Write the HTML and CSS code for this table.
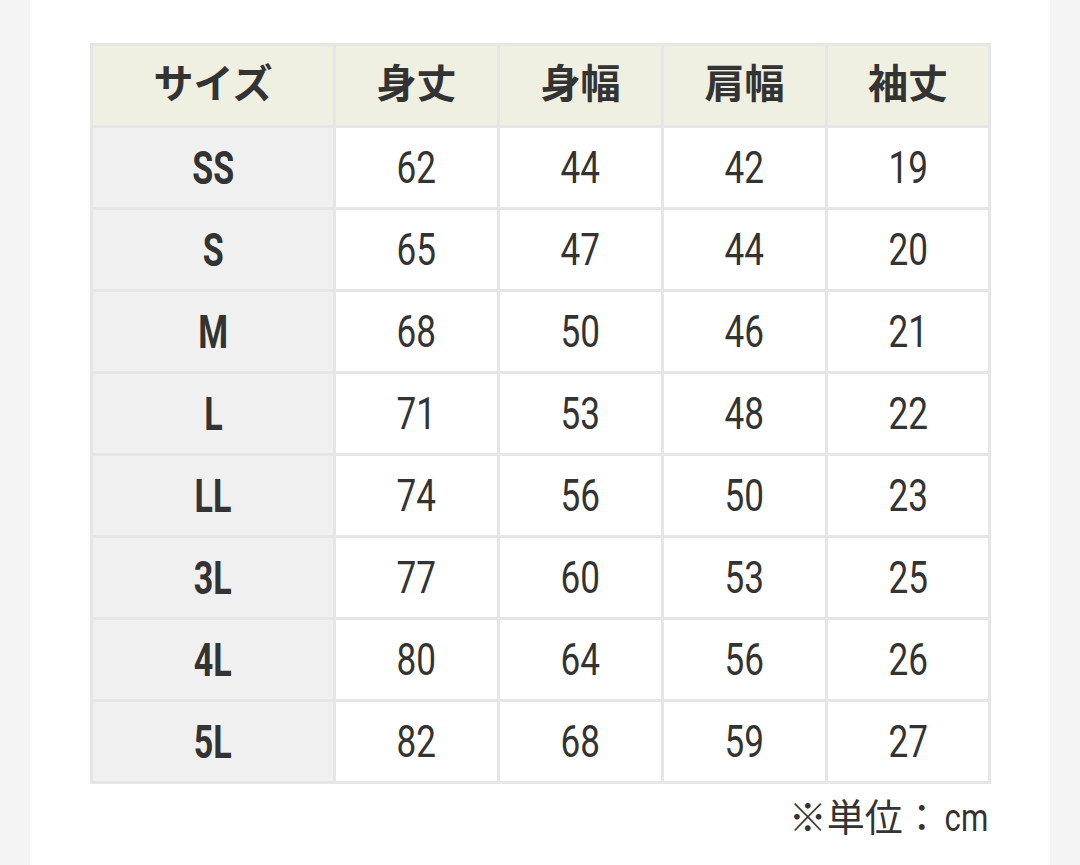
FILE: index.html
```html
<!DOCTYPE html>
<html lang="ja">
<head>
<meta charset="utf-8">
<link rel="stylesheet" href="styles.css">
</head>
<body>
<div class="panel">
  <table class="size-table">
    <colgroup>
      <col class="c1"><col class="cn"><col class="cn"><col class="cn"><col class="cl">
    </colgroup>
    <thead>
      <tr><th>サイズ</th><th>身丈</th><th>身幅</th><th>肩幅</th><th>袖丈</th></tr>
    </thead>
    <tbody>
      <tr><th><span class="n">SS</span></th><td><span class="n">62</span></td><td><span class="n">44</span></td><td><span class="n">42</span></td><td><span class="n">19</span></td></tr>
      <tr><th><span class="n">S</span></th><td><span class="n">65</span></td><td><span class="n">47</span></td><td><span class="n">44</span></td><td><span class="n">20</span></td></tr>
      <tr><th><span class="n">M</span></th><td><span class="n">68</span></td><td><span class="n">50</span></td><td><span class="n">46</span></td><td><span class="n">21</span></td></tr>
      <tr><th><span class="n">L</span></th><td><span class="n">71</span></td><td><span class="n">53</span></td><td><span class="n">48</span></td><td><span class="n">22</span></td></tr>
      <tr><th><span class="n">LL</span></th><td><span class="n">74</span></td><td><span class="n">56</span></td><td><span class="n">50</span></td><td><span class="n">23</span></td></tr>
      <tr><th><span class="n">3L</span></th><td><span class="n">77</span></td><td><span class="n">60</span></td><td><span class="n">53</span></td><td><span class="n">25</span></td></tr>
      <tr><th><span class="n">4L</span></th><td><span class="n">80</span></td><td><span class="n">64</span></td><td><span class="n">56</span></td><td><span class="n">26</span></td></tr>
      <tr><th><span class="n">5L</span></th><td><span class="n">82</span></td><td><span class="n">68</span></td><td><span class="n">59</span></td><td><span class="n">27</span></td></tr>
    </tbody>
  </table>
  <p class="unit">※単位：<span class="cm">cm</span></p>
</div>
</body>
</html>
```

FILE: styles.css
```css
html, body {
  margin: 0;
  padding: 0;
}
body {
  background: #f4f4f4;
  font-family: "Noto Sans CJK JP", "Roboto", sans-serif;
  color: #333333;
  height: 865px;
  overflow: hidden;
}
.panel {
  box-sizing: border-box;
  background: #ffffff;
  margin: 0 30px;
  padding: 43px 60px 0 60px;
  height: 865px;
}
.size-table {
  border-collapse: collapse;
  width: 898px;
  table-layout: fixed;
  border: 2px solid #e4e4e4;
}
.c1 { width: 243px; }
.cn { width: 164px; }
.cl { width: 163px; }
.size-table th,
.size-table td {
  border: 3px solid #e6e6e6;
  height: 79px;
  padding: 0;
  text-align: center;
  vertical-align: middle;
}
.size-table thead th {
  background: #efefe2;
  font-size: 40px;
  font-weight: 700;
  line-height: 1;
  height: 69px;
  padding-bottom: 10px;
  color: #333333;
}
.size-table tbody th {
  background: #f0f0f0;
  font-weight: 700;
}
.size-table tbody td {
  background: #ffffff;
}
.n {
  display: inline-block;
  font-family: "Roboto", sans-serif;
  font-size: 45px;
  line-height: 1;
  transform: scaleX(0.78);
  color: #333333;
}
.size-table tbody td .n {
  font-weight: 400;
}
.size-table tbody th .n {
  font-size: 46px;
  font-weight: 700;
  transform: scaleX(0.74);
}
.unit {
  width: 898px;
  margin: 6px 0 0 0;
  text-align: right;
  font-size: 38px;
  line-height: 50px;
  color: #333333;
  letter-spacing: 0;
}
.cm {
  display: inline-block;
  font-family: "Roboto", sans-serif;
  transform: scaleX(0.82);
  transform-origin: right center;
  margin-left: -6px;
}
```
